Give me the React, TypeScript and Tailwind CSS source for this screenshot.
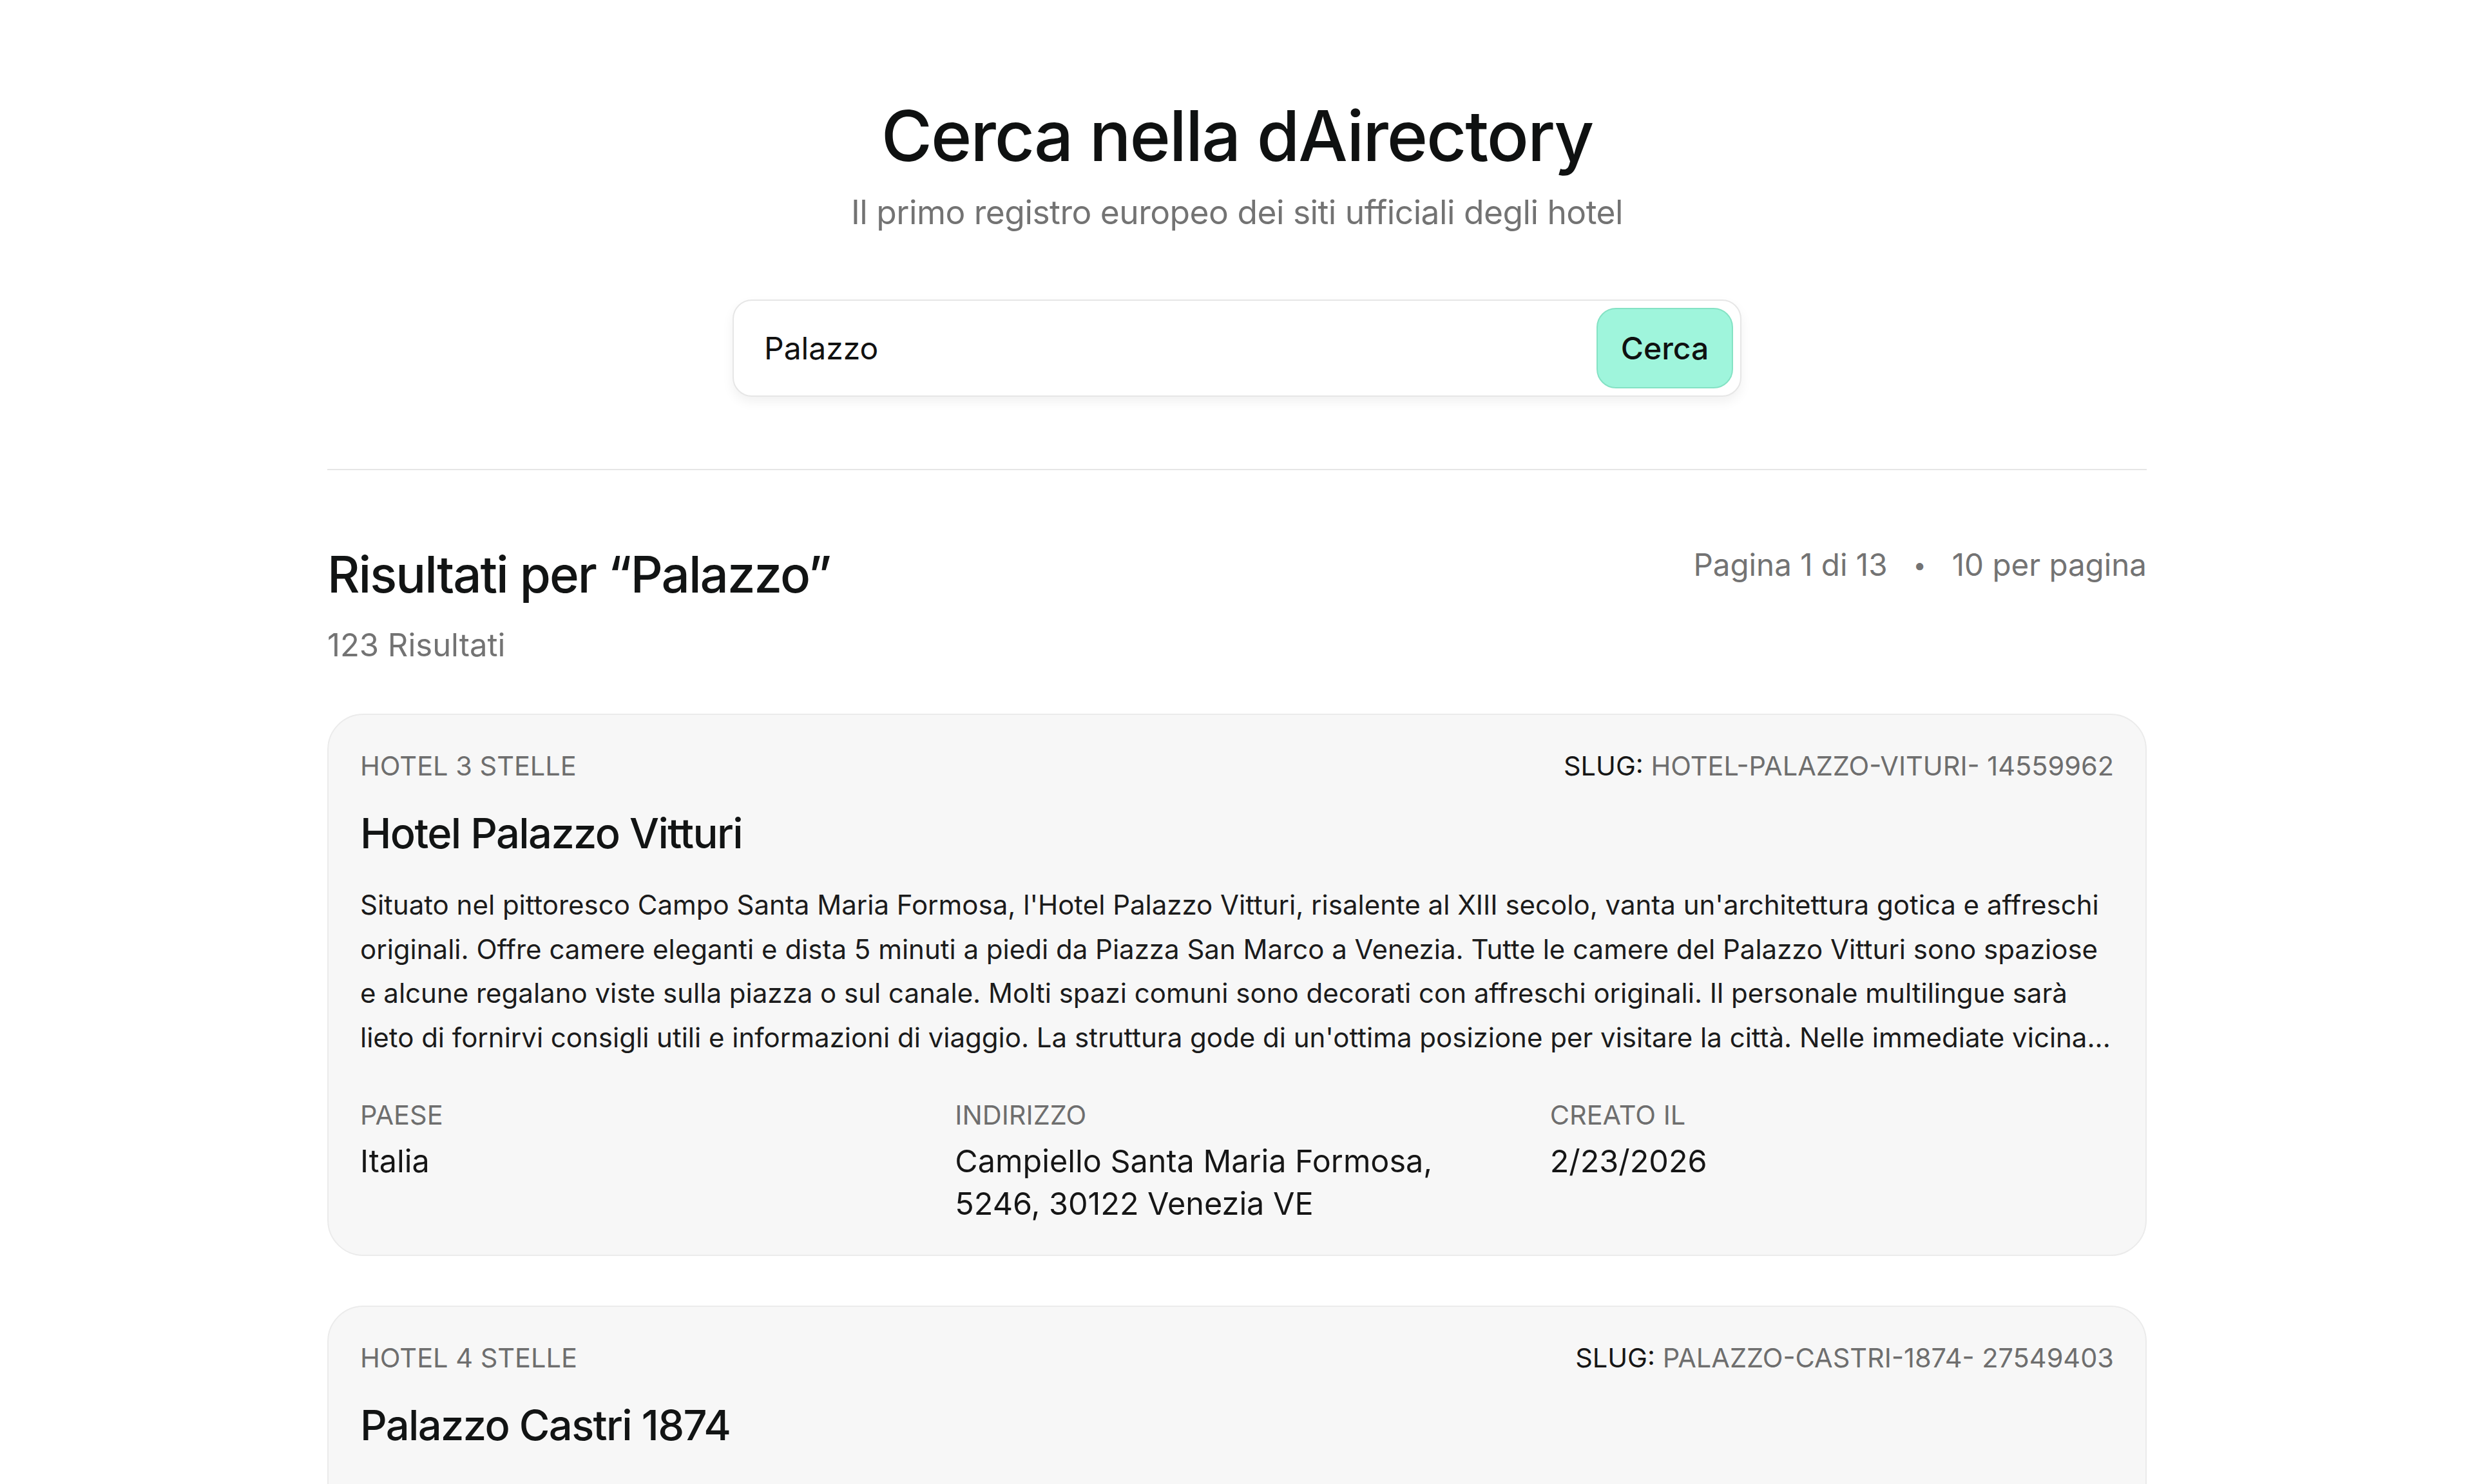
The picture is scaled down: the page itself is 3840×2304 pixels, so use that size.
import React from "react";

type Hotel = {
  category: string;
  slug: string;
  name: string;
  lines: string[];
  country: string;
  address: string[];
  created: string;
};

const hotels: Hotel[] = [
  {
    category: "Hotel 3 stelle",
    slug: "HOTEL-PALAZZO-VITURI- 14559962",
    name: "Hotel Palazzo Vitturi",
    lines: [
      "Situato nel pittoresco Campo Santa Maria Formosa, l'Hotel Palazzo Vitturi, risalente al XIII secolo, vanta un'architettura gotica e affreschi",
      "originali. Offre camere eleganti e dista 5 minuti a piedi da Piazza San Marco a Venezia. Tutte le camere del Palazzo Vitturi sono spaziose",
      "e alcune regalano viste sulla piazza o sul canale. Molti spazi comuni sono decorati con affreschi originali. Il personale multilingue sarà",
      "lieto di fornirvi consigli utili e informazioni di viaggio. La struttura gode di un'ottima posizione per visitare la città. Nelle immediate vicina...",
    ],
    country: "Italia",
    address: ["Campiello Santa Maria Formosa,", "5246, 30122 Venezia VE"],
    created: "2/23/2026",
  },
  {
    category: "Hotel 4 stelle",
    slug: "PALAZZO-CASTRI-1874- 27549403",
    name: "Palazzo Castri 1874",
    lines: [
      "Situato nel cuore di Bologna, a pochi passi da Piazza Maggiore, il Palazzo Castri 1874 occupa un edificio storico restaurato con cura e",
      "propone camere e suite arredate in stile classico, con soffitti affrescati, pavimenti in legno e bagni in marmo. La colazione viene servita",
      "ogni mattina nella sala del palazzo e il personale della reception, disponibile 24 ore su 24, è a disposizione per consigli sulla città",
      "e sui suoi dintorni. La struttura dista pochi minuti a piedi dalle Due Torri e dalla stazione centrale, ben collegata con l'aeropor...",
    ],
    country: "Italia",
    address: ["Via Amendola, 2,", "40121 Bologna BO"],
    created: "2/23/2026",
  },
];

const HotelCard = ({ hotel }: { hotel: Hotel }) => {
  return (
    <div className="rounded-[56px] border-2 border-[#ebebeb] bg-[#f7f7f7] px-[49px] pt-[52px] pb-[46px]">
      <div className="flex items-start justify-between text-[41.5px] leading-[54px] uppercase">
        <span className="text-[#6e6e6e]">{hotel.category}</span>
        <span className="text-[#6e6e6e]">
          <span className="text-[#161616]">Slug:</span> {hotel.slug}
        </span>
      </div>
      <h3 className="mt-[38px] text-[65px] leading-[80px] font-medium tracking-tight text-[#121414]">
        {hotel.name}
      </h3>
      <p className="mt-[37px] overflow-hidden whitespace-nowrap text-[42px] leading-[68.6px] text-[#1b1b1b]">
        {hotel.lines.map((line, i) => (
          <span key={i} className="block">
            {line}
          </span>
        ))}
      </p>
      <div className="mt-[59px] grid grid-cols-3 gap-12">
        <div>
          <div className="text-[41.5px] leading-[54px] uppercase text-[#6e6e6e]">Paese</div>
          <div className="mt-[12px] text-[48.5px] leading-[66px] text-[#161616]">{hotel.country}</div>
        </div>
        <div>
          <div className="text-[41.5px] leading-[54px] uppercase text-[#6e6e6e]">Indirizzo</div>
          <div className="mt-[12px] text-[48.5px] leading-[66px] text-[#161616]">
            {hotel.address[0]}
            <br />
            {hotel.address[1]}
          </div>
        </div>
        <div>
          <div className="text-[41.5px] leading-[54px] uppercase text-[#6e6e6e]">Creato il</div>
          <div className="mt-[12px] text-[48.5px] leading-[66px] text-[#161616]">{hotel.created}</div>
        </div>
      </div>
    </div>
  );
};

const App = () => {
  return (
    <div className="min-h-screen bg-white font-['Inter','Liberation_Sans',sans-serif] text-[#121414]">
      <div className="mx-auto max-w-[2824px] pt-[146px] pb-[200px]">
        <div className="flex flex-col items-center">
          <h1 className="text-[108px] leading-[130px] font-medium tracking-[-0.02em] text-[#0f1111]">
            Cerca nella dAirectory
          </h1>
          <p className="mt-[19px] text-[51.5px] leading-[68px] tracking-[-0.01em] text-[#737373]">
            Il primo registro europeo dei siti ufficiali degli hotel
          </p>

          <form
            className="mt-[102px] flex w-[1566px] items-center rounded-[30px] border-2 border-[#e6e6e6] bg-white p-[11px] shadow-[0_8px_18px_rgba(0,0,0,0.06)]"
            onSubmit={(e) => e.preventDefault()}
          >
            <input
              className="min-w-0 flex-1 bg-transparent pl-[36px] text-[48px] text-[#111] outline-none"
              defaultValue="Palazzo"
            />
            <button
              type="submit"
              className="h-[125px] w-[212px] rounded-[30px] border-2 border-[#84e2c4] bg-[#9ff5dc] text-[48px] font-medium text-[#0f1111]"
            >
              Cerca
            </button>
          </form>
        </div>

        <div className="mt-[112px] border-t-2 border-[#e6e6e6]" />

        <div className="mt-[116px] flex items-start justify-between">
          <div>
            <h2 className="text-[78px] leading-[92px] font-medium tracking-tight text-[#121414]">
              Risultati per “Palazzo”
            </h2>
            <p className="mt-[33px] text-[49px] leading-[62px] text-[#737373]">123 Risultati</p>
          </div>
          <div className="flex items-center gap-[40px] text-[47.5px] leading-[62px] text-[#737373]">
            <span>Pagina 1 di 13</span>
            <span className="text-[36px]">•</span>
            <span>10 per pagina</span>
          </div>
        </div>

        <div className="mt-[75px] flex flex-col gap-[77px]">
          {hotels.map((h) => (
            <HotelCard key={h.slug} hotel={h} />
          ))}
        </div>
      </div>
    </div>
  );
};

export default App;
